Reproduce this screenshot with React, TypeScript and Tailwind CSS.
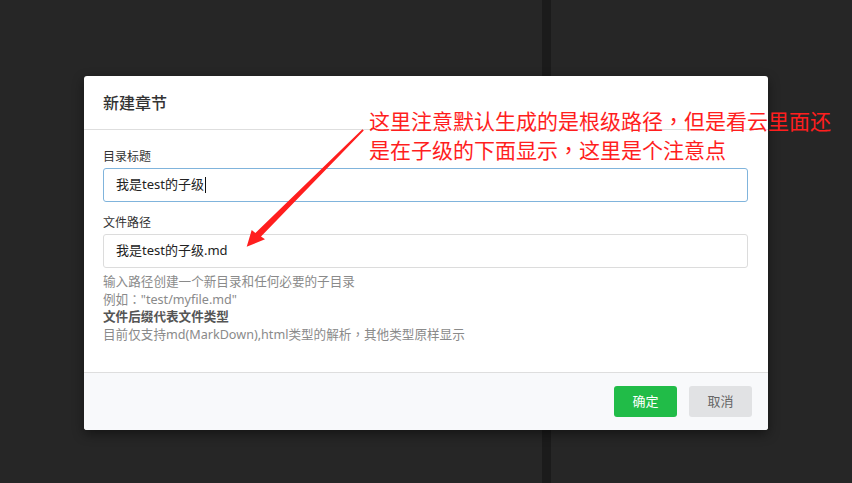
import React from 'react'

const font = { fontFamily: '"Noto Sans", "Noto Sans CJK SC", sans-serif' }

// full-width punctuation sits centred in the reference, as in the TC face
const P = ({ children }: { children: React.ReactNode }) => (
  <span className="font-['Noto_Sans_CJK_TC',sans-serif]">{children}</span>
)

const Arrow = () => (
  <svg className="absolute left-0 top-0 pointer-events-none" width="852" height="483" viewBox="0 0 852 483">
    <path
      d="M 363.8 130.6 L 261 236.4 L 265 239.3 L 246.7 246.7 L 251.7 230 L 255.4 233 L 362.4 129.2 Z"
      fill="#ff1e1e"
    />
  </svg>
)

const App = () => {
  return (
    <div className="relative w-[852px] h-[483px] overflow-hidden bg-[#262626]" style={font}>
      {/* panels behind the overlay */}
      <div className="flex h-full">
        <div className="w-[542px] h-full bg-[#262626]" />
        <div className="w-[9px] h-full bg-[#1b1b1b]" />
        <div className="flex-1 h-full bg-[#262626]" />
      </div>

      {/* dialog */}
      <div className="absolute left-[84px] top-[76px] w-[684px] h-[354px] bg-white rounded-[3px] shadow-[0_4px_12px_rgba(0,0,0,0.45)] flex flex-col overflow-hidden">
        <div className="h-[54px] shrink-0 border-b border-[#dedede] flex items-center pl-[19px] text-[16px] text-[#333] font-medium">
          新建章节
        </div>

        <div className="flex-1 pl-[19px] pr-[20px] pt-[17px]">
          <div className="h-[20px] leading-[20px] text-[12px] text-[#333] mb-px">目录标题</div>
          <div className="h-[34px] border border-[#80b4dc] rounded-[3px] flex items-center pl-[12px] text-[13px] text-[#222]">
            <span>我是test的子级</span>
            <span className="w-px h-[16px] bg-[#111] ml-px" />
          </div>

          <div className="h-[20px] leading-[20px] text-[12px] text-[#333] mt-[11px] mb-px">文件路径</div>
          <div className="h-[34px] border border-[#dcdcdc] rounded-[3px] flex items-center pl-[12px] text-[13px] text-[#222]">
            我是test的子级.md
          </div>

          <div className="mt-[5px] text-[12.6px] leading-[17px] text-[#8a8a8a]">
            <div>输入路径创建一个新目录和任何必要的子目录</div>
            <div>例如<P>：</P>"test/myfile.md"</div>
            <div className="font-bold text-[#555]">文件后缀代表文件类型</div>
            <div>目前仅支持md(MarkDown),html类型的解析<P>，</P>其他类型原样显示</div>
          </div>
        </div>

        <div className="h-[58px] shrink-0 border-t border-[#dedede] bg-[#f8f9fb] flex items-center justify-end gap-[12px] pr-[16px]">
          <button className="w-[63px] h-[31px] rounded-[3px] bg-[#21bc48] text-white text-[13px]">确定</button>
          <button className="w-[63px] h-[31px] rounded-[3px] bg-[#e1e2e4] text-[#666] text-[13px]">取消</button>
        </div>
      </div>

      {/* annotation */}
      <div className="absolute left-[369px] top-[106px] text-[21px] leading-[28px] text-[#ff1e1e] whitespace-nowrap">
        <div>这里注意默认生成的是根级路径<P>，</P>但是看云里面还</div>
        <div>是在子级的下面显示<P>，</P>这里是个注意点</div>
      </div>
      <Arrow />
    </div>
  )
}

export default App
